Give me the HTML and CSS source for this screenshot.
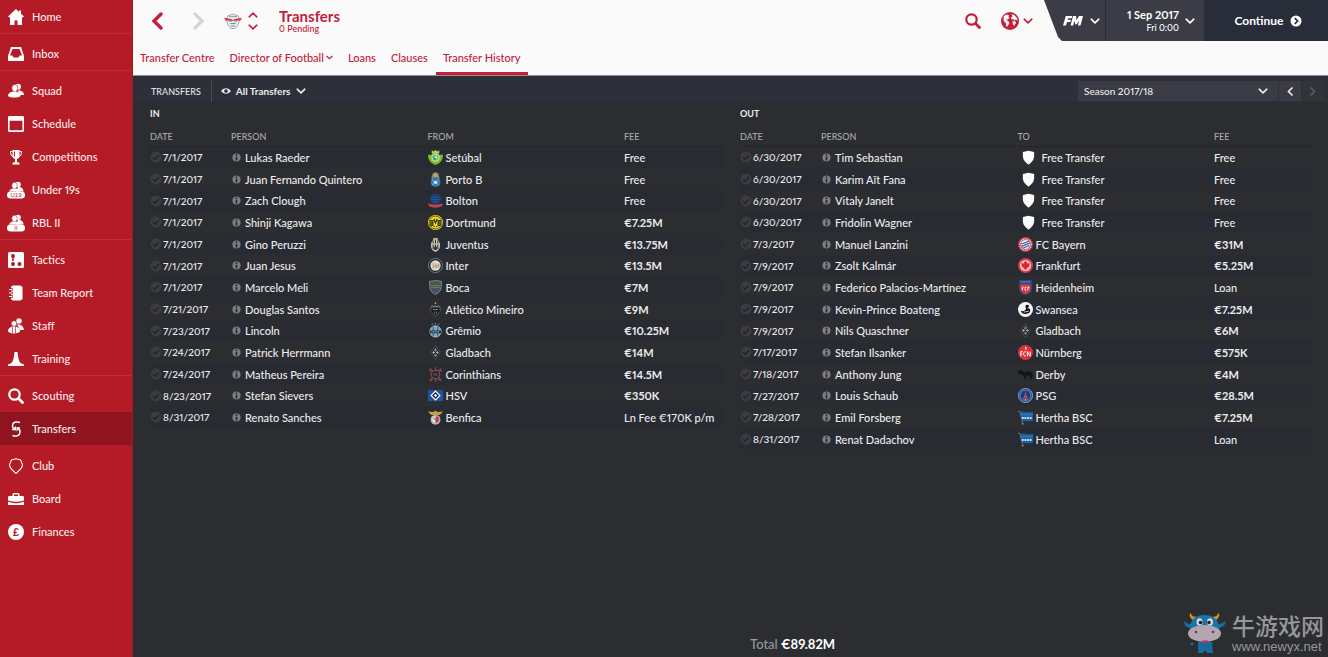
FILE: index.html
```html
<!DOCTYPE html>
<html lang="en">
<head>
  <meta charset="UTF-8">
  <meta name="viewport" content="width=device-width, initial-scale=1.0">
  <title>Transfers - Transfer History</title>
  <link rel="stylesheet" href="styles.css">
</head>
<body>

<!-- Icon sprite -->
<svg class="sprite" aria-hidden="true">
  <symbol id="chev-down" viewBox="0 0 10 6"><path d="M1.2 1.2 5 4.8 8.8 1.2" fill="none" stroke="currentColor" stroke-width="1.6" stroke-linecap="round"/></symbol>
  <symbol id="chev-left" viewBox="0 0 12 18"><path d="M10 2 3 9l7 7" fill="none" stroke="currentColor" stroke-width="3.4" stroke-linecap="round"/></symbol>
  <symbol id="chev-right" viewBox="0 0 12 18"><path d="m2 2 7 7-7 7" fill="none" stroke="currentColor" stroke-width="3.4" stroke-linecap="round"/></symbol>

  <symbol id="home" viewBox="0 0 16 16"><path d="M8 0 0 7.6l1.2 1 .8-.6V16h4.500v-4.500h3V16H14V8l.8.6 1.200-1-3-2.900V1.500h-2v1.400z"/></symbol>
  <symbol id="inbox" viewBox="0 0 16 16"><path fill-rule="evenodd" d="M3 1h10l3 9v5H0v-5zm1.500 2L2 9.500h2.500l1 2h5l1-2H14L11.500 3z"/></symbol>
  <symbol id="people" viewBox="0 0 16 16"><circle cx="10" cy="3.8" r="3"/><path d="M10 7.500c4 0 6 2 6 4.500h-5z"/><ellipse cx="6.800" cy="5" rx="3" ry="3.600" stroke="#b51a27" stroke-width=".6"/><path d="M0 13c0-3 3-4.500 6.500-4.500S12.500 10 12.500 13c-2 2-10 2-12.500 0z"/></symbol>
  <symbol id="calendar" viewBox="0 0 16 16"><path fill-rule="evenodd" d="M1 0h14l1 1v14l-1 1H1l-1-1V1zm.6 4.700v9.600h12.800V4.700z"/></symbol>
  <symbol id="trophy" viewBox="0 0 16 16"><path d="M4.500 1h7v5.500c0 2-1 3.200-2.500 3.500v3l2.500 1v1.500h-7V14L7 13v-3C5.500 9.700 4.500 8.500 4.500 6.500z"/><path d="M4.500 2.500H2.600c0 3 .5 5 2.900 5M11.500 2.500h1.900c0 3-.5 5-2.900 5" fill="none" stroke="currentColor"/><path d="M6.500 2.500v5" stroke="#b51a27"/></symbol>
  <symbol id="squad-u19" viewBox="0 0 18 18"><circle cx="11" cy="3.500" r="2.800"/><path d="M11 6c4 0 5.500 2 5.500 4.500H9z"/><ellipse cx="7.500" cy="4.500" rx="2.700" ry="3.200" stroke="#b51a27" stroke-width=".5"/><path d="M2 10.500C3 8 5 7.500 7.500 7.500s5 1 5.500 3z"/><rect y="10.500" width="18" height="7" rx="3.500"/><text x="9" y="16.400" text-anchor="middle" class="tag">U19</text></symbol>
  <symbol id="squad-ii" viewBox="0 0 18 18"><circle cx="11" cy="3.500" r="2.800"/><path d="M11 6c4 0 5.500 2 5.500 4.500H9z"/><ellipse cx="7.500" cy="4.500" rx="2.700" ry="3.200" stroke="#b51a27" stroke-width=".5"/><path d="M2 10.500C3 8 5 7.500 7.500 7.500s5 1 5.500 3z"/><rect y="10.500" width="18" height="7" rx="3.500"/><text x="9" y="16.400" text-anchor="middle" class="tag">II</text></symbol>
  <symbol id="tactics" viewBox="0 0 16 16"><rect width="16" height="16" rx="1.500"/><g fill="#b51a27"><circle cx="5" cy="4" r="2"/><path d="M4.200 5h1.600v4H4.200z"/><circle cx="5" cy="12" r="2"/><circle cx="11.500" cy="12" r="2"/></g></symbol>
  <symbol id="report" viewBox="0 0 16 16"><path d="M4.500.5h8L14.500 2v12l-2 1.500h-8L3 14V2z"/><path d="M1 4.500h4M1 8h4M1 11.500h4" stroke="#b51a27" stroke-width="2.400"/><path d="M1 4.500h3.500M1 8h3.500M1 11.500h3.500" stroke="currentColor" stroke-width="1"/></symbol>
  <symbol id="staff" viewBox="0 0 16 16"><circle cx="11" cy="3" r="2.700"/><path d="M9 6.500c4-.5 6.500 1.500 7 5.500h-4z"/><circle cx="6" cy="5.500" r="2.700" stroke="#b51a27" stroke-width=".5"/><path d="M0 13.500C0 10 2.500 8.500 6 8.500s6 1.500 6 5c-2 2.500-10 2.500-12 0z"/><path d="M4.500 9v6M7.500 9v6" stroke="#b51a27" stroke-width=".7"/></symbol>
  <symbol id="cone" viewBox="0 0 16 16"><path d="M6.500 1h3C10 7 11 10.500 12.500 12L16 13.500V15H0v-1.500L3.500 12C5 10.500 6 7 6.500 1z"/></symbol>
  <symbol id="search" viewBox="0 0 16 16"><circle cx="6.500" cy="6.500" r="5.200" fill="none" stroke="currentColor" stroke-width="2.200"/><path d="m10.500 10.500 4 4" stroke="currentColor" stroke-width="2.800" stroke-linecap="round"/></symbol>
  <symbol id="swap" viewBox="0 0 16 16"><path d="M12 1.500C8 0 4.500 1.500 4.500 4.500S6.500 8 6.500 8M4.500 14.500c4 1.500 7.500 0 7.500-3.500 0-2-1-3.500-2.500-4" fill="none" stroke="currentColor" stroke-width="1.500"/><path d="M3.500 9 8 9.500V5zM12.500 6.500 8.500 6v4.500z"/></symbol>
  <symbol id="shield-line" viewBox="0 0 16 16"><path d="M8 .8 12.500 2 14.500 6.500C14.500 10.500 11 13 8 15.300 5 13 1.500 10.500 1.500 6.500L3.500 2z" fill="none" stroke="currentColor" stroke-width="1.100"/></symbol>
  <symbol id="case" viewBox="0 0 16 16"><path fill-rule="evenodd" d="M4.500 5V3l1-1h5l1 1v2H15l1 1v3.500l-6 1.300h-4L0 9.500V6l1-1zM6 5h4V3.500H6z"/><path d="m0 10.800 6.500 1.400h3L16 10.800V14H0z"/></symbol>
  <symbol id="pound" viewBox="0 0 16 16"><circle cx="8" cy="8" r="8"/><text x="8" y="12" text-anchor="middle" class="pound-sign">£</text></symbol>
  <symbol id="globe" viewBox="0 0 18 18"><circle cx="9" cy="9" r="9"/><path d="M2.500 4.500 5 2.500l3 .5-.5 1.500L8.500 6 6.500 7.500 5 7.700l2.500 1.500.8 2-1.800 3-1 .8-.7-4L2.700 9zM10.500 2.200l2.500.6 3 3.200.5 3-1.500-1.500-1.500 1-1.500-1.500-1.500.5L10 5.500l1.500-1zM11.500 9l3 .5.5 1.500-2 3-1.200-2z" fill="#fafafa"/></symbol>
  <symbol id="eye" viewBox="0 0 12 10"><path fill-rule="evenodd" d="M0 5C2.500.5 9.500.5 12 5 9.500 9.500 2.500 9.500 0 5zm6-2.300a2.300 2.300 0 1 0 0 4.600 2.300 2.300 0 0 0 0-4.600z"/></symbol>
  <symbol id="go" viewBox="0 0 12 12"><circle cx="6" cy="6" r="5.500"/><path d="m4.800 3.200 2.800 2.800-2.800 2.800" fill="none" stroke="#282d39" stroke-width="1.700"/></symbol>
  <symbol id="fm" viewBox="0 0 20 10"><path d="M2.800 0h6.400L8.600 2.200H5l-.4 1.500h3.300L7.300 5.900H4L3 9.500H0zM10 0h3l.5 4L16 0h4l-2.500 9.500h-2.600l1.300-5-2.500 3.700h-1.600l-.6-3.700-1.300 5H7.500z"/></symbol>
  <symbol id="tick" viewBox="0 0 12 12"><circle cx="6" cy="6" r="5.500" fill="#3b3c42"/><path d="m3 6.200 2 2L9 4.200" fill="none" stroke="#23252b" stroke-width="1.500"/></symbol>
  <symbol id="info" viewBox="0 0 10 10"><circle cx="5" cy="5" r="4.500" fill="#7d7e82"/><path d="M4.100 4.300h1.800v3.900H4.100zM4.100 1.800h1.800v1.600H4.100z" fill="#25272c"/></symbol>

  <symbol id="rbl" viewBox="0 0 18 16"><path d="M3.500 3 9 1l5.500 2 1 4-1.500 5-3 3.500H7L4 12 2.500 7z" fill="#e6e9ee" stroke="#98a2b3" stroke-width=".9"/><path d="M5 3.500h8" stroke="#98a2b3"/><path d="M0 4.800 7 6l2 1 2-1 7-1.200-1.500 2.700-4.500.3H6L1.500 7.500z" fill="#dc3a4c"/><path d="m5 7.800 2.500.7M13 7.800l-2.500.7M6.500 10.500h5M7 13h4" stroke="#7d8899"/></symbol>
  <symbol id="setubal" viewBox="0 0 16 16"><path d="m4 0 2 1.500L8 0l2 1.500L12 0v4H4z" fill="#b9d433"/><path d="M0 5h16c0 6-3 9-8 11C3 14 0 11 0 5z" fill="#7cba2f"/><circle cx="8" cy="8" r="4.500" fill="#b9dfa6"/><circle cx="8" cy="8" r="3" fill="#35a556"/><path d="M7 6.500h3M7 8h2.500v2" stroke="#fff" fill="none"/></symbol>
  <symbol id="porto" viewBox="0 0 16 16"><path d="M5 1.500 8 0l3 1.500L12.500 7 8 9 3.500 7z" fill="#8d8a82"/><path d="M6.300 2h3.400v3.500H6.300z" fill="#d0a347"/><circle cx="8" cy="10.800" r="5.200" fill="#3479b5"/><path d="m4 8 8 6M12 8l-8 6" stroke="#84b5dc"/><circle cx="8" cy="11" r="1.800" fill="#dce8f2"/></symbol>
  <symbol id="bolton" viewBox="0 0 16 16"><circle cx="8" cy="6.500" r="6" fill="#193f75"/><path d="M4 4.500h8M3 7h10M5 9.500h6" stroke="#2d5b8f"/><path d="M0 11c5 2 11 2 16 0l-1.500 3.500c-4 1.500-9 1.500-13 0z" fill="#c5424c"/></symbol>
  <symbol id="bvb" viewBox="0 0 16 16"><circle cx="8" cy="8" r="8" fill="#f3e11b"/><circle cx="8" cy="8" r="6.800" fill="none" stroke="#222" stroke-width=".7"/><path d="M3 6v5h2.200V6.200zM3 8.500h2M6.200 4 8 8.500 9.800 4M10.800 6v5H13V6zM10.800 8.500h2" fill="none" stroke="#222" stroke-width="1.200"/><path d="M6 12.300h1.500M8.500 12.300H10" stroke="#222"/></symbol>
  <symbol id="juve" viewBox="0 0 16 16"><path d="M5.500 1h5v2.500h-5z" fill="#b5ac93"/><ellipse cx="8" cy="9" rx="4.800" ry="6.600" fill="#d4d1c8"/><path d="M5.500 4v9M8 3v9M10.500 4v9" stroke="#25262a" stroke-width="1.100"/><path d="M3.500 7.500h9" stroke="#cbbd91" stroke-width="1.400"/><ellipse cx="8" cy="12" rx="2" ry="2.200" fill="#3b3a36"/></symbol>
  <symbol id="inter" viewBox="0 0 16 16"><circle cx="8" cy="8" r="7.500" fill="#1c2433" stroke="#6e8790"/><circle cx="8" cy="8" r="5.500" fill="#e3ddd2"/><path d="M5.500 5v6l3-5v5l3-5v5" fill="none" stroke="#a78d62" stroke-width=".9"/></symbol>
  <symbol id="boca" viewBox="0 0 16 16"><path d="M1.500 1.500 8 .5l6.500 1L14 8c0 3.500-3 6-6 7.500C5 14 2 11.500 2 8z" fill="#46546a" stroke="#88905f"/><path d="M3.500 5.500h9v3h-9z" fill="#75814e"/><path d="M4 7h8" stroke="#333d4c" stroke-dasharray="1.500 .7"/></symbol>
  <symbol id="mineiro" viewBox="0 0 16 16"><circle cx="8" cy="1.200" r=".9" fill="#c5a635"/><path d="M3 5.500h10V10l-5 5.500L3 10z" fill="#191a1d" stroke="#666" stroke-width=".8"/><path d="m3 5.500 2-1.500 1.500 1.500L8 3.500l1.500 2L11 4l2 1.500M5 8h6" fill="none" stroke="#999" stroke-width=".8"/><path d="M7 10v3M9 10v3" stroke="#888" stroke-width=".7"/></symbol>
  <symbol id="gremio" viewBox="0 0 16 16"><path d="M4 1.200h1M7.500.6h1M11 1.200h1" stroke="#a8a698" stroke-width="1.300"/><circle cx="8" cy="9" r="6" fill="#6eaed5" stroke="#b9cdd6" stroke-width=".8"/><path d="M2.200 8h11.600v3H2.200z" fill="#20252c"/><path d="M5.500 4v10M10.500 4v10" stroke="#35404d" stroke-width=".9"/><path d="M3.500 9.500h9" stroke="#ddd" stroke-dasharray="1.200 .6"/></symbol>
  <symbol id="gladbach" viewBox="0 0 16 16"><path d="m8 .5 4.800 7.500L8 15.500 3.200 8z" fill="#17191c" stroke="#606266" stroke-width=".8"/><path d="m8 3 1.700 2.500L8 7.300 6.300 5.500zM8 9l1.700 1.700L8 13l-1.700-2.300z" fill="#85868a"/><path d="m4.500 8 1.500-1.500L7.500 8 6 9.500zm4 0L10 6.500 11.500 8 10 9.500z" fill="#bcbcbe"/></symbol>
  <symbol id="corinthians" viewBox="0 0 16 16"><path d="m2 1.500 12 12.500M14 1.500 2 14M8 0v16" stroke="#9c383b" stroke-width="1.500"/><path d="M1 4.500 4 3M12 3l3 1.500M2 15l3-2M11 13l3 2" stroke="#ad3f40" stroke-width="1.300"/><circle cx="8" cy="8" r="4.600" fill="#29292d" stroke="#7c787b" stroke-width=".8"/><path d="M5.800 6.500h4.400v3H5.800z" fill="#6a3738"/></symbol>
  <symbol id="hsv" viewBox="0 0 16 16"><path d="M0 2h16v12H0z" fill="#1d52a5"/><path d="m8 2.500 5.500 5.500L8 13.500 2.500 8z" fill="#fff"/><path d="m8 4.300 3.700 3.700L8 11.700 4.300 8z" fill="#14161a"/><path d="M8 6.200 9.800 8 8 9.800 6.200 8z" fill="#fff"/></symbol>
  <symbol id="benfica" viewBox="0 0 16 16"><path d="M0 1.500 6 2.200 8 .5l2 1.700 6-.7-3 3.500-4 .5-1 2-1-2-4-.5z" fill="#c3a040"/><circle cx="8" cy="10.500" r="5.300" fill="#b9b4ae"/><path d="M4.500 7h7v4L8 15l-3.500-4z" fill="#e9e5e0"/><path d="M8 7h3.500v4L8 15z" fill="#c13e46"/><path d="m5 8 6 5" stroke="#415a7b" stroke-width=".9"/></symbol>
  <symbol id="shield" viewBox="0 0 16 16"><path d="M2 2.200 8 .8l6 1.400v4.300c0 4.500-3 7-6 9.200-3-2.200-6-4.700-6-9.200z" fill="#fdfdfb"/></symbol>
  <symbol id="bayern" viewBox="0 0 16 16"><circle cx="8" cy="8" r="8" fill="#c93a52"/><circle cx="8" cy="8" r="6" fill="none" stroke="#eed6dc" stroke-width="1.200" stroke-dasharray="1.500 .7"/><circle cx="8" cy="8" r="4.800" fill="#e9edf5"/><path d="m3.800 7.500 8-3M3.500 10 12.500 6.500M5 12l7-3" stroke="#3c63ab" stroke-width="1.300"/></symbol>
  <symbol id="frankfurt" viewBox="0 0 16 16"><circle cx="8" cy="8" r="8" fill="#e23844"/><circle cx="8" cy="8" r="6" fill="#f3c3c5"/><path d="M3.500 5 6 6l.8-2L8 3.500 9.200 4l.8 2 2.500-1-.5 4-2 1.500L8 13l-2-2.500L4 9z" fill="#d92635"/></symbol>
  <symbol id="heidenheim" viewBox="0 0 16 16"><path d="M1 0h14v9c0 4-3 6-7 7-4-1-7-3-7-7z" fill="#244a83"/><path d="M3 2h10" stroke="#7f9ac0" stroke-dasharray="2 .6"/><path d="M2.500 4.500h11V9c0 3-2 5-5.500 6-3.500-1-5.500-3-5.500-6z" fill="#dd3340"/><path d="M4.500 11V7.500H6M4.500 9h1M9 7.500H7.500V11H9M10.500 11V7.500h1.200V9" fill="none" stroke="#fff" stroke-width=".9"/></symbol>
  <symbol id="swansea" viewBox="0 0 16 16"><circle cx="8" cy="8" r="8" fill="#f4f4f4"/><path d="M8.500 3.500c2-1.200 3.700 0 3 1.700L9.500 7c2-.8 4 0 3.500 2.500-.5 2.300-3 3.200-5.500 3.200S3.300 11.500 3 9.300c1.500.7 3 .5 4 0L8.800 7C7.800 6 7.500 4.500 8.500 3.500z" fill="#17181a"/><path d="m6 10.800 5.500-1" stroke="#f4f4f4" stroke-width=".8"/></symbol>
  <symbol id="nurnberg" viewBox="0 0 16 16"><circle cx="8" cy="8" r="8" fill="#df2f3b"/><path d="M3 12V7h2.200M3 9.300h1.700M8.500 7.500C6.500 6.500 6 8 6 9.500s1 3 2.500 2M10 12V7l3 5V7M7.500 3 8.500 2.300v3" fill="none" stroke="#fff" stroke-width="1"/></symbol>
  <symbol id="derby" viewBox="0 0 16 16"><path d="M0 4.500 3 3l3 2 6-.5 3 1.500.8 3.500-1 .5 1 3H14l-1.500-3-3-1L8 13H6.500L6 9 3 7.500 1 8z" fill="#151619"/></symbol>
  <symbol id="psg" viewBox="0 0 16 16"><circle cx="8" cy="8" r="7.500" fill="#24509a" stroke="#8fa6c9"/><circle cx="8" cy="8" r="5.500" fill="#1a3c7d" stroke="#b9c4d6" stroke-width=".6" stroke-dasharray="1.400 .7"/><path d="M8 3.500 9 8l2 4H9.500L8 9.500 6.500 12H5l2-4z" fill="#d4485a"/><path d="M7 12.500h2" stroke="#e6d38a"/></symbol>
  <symbol id="hertha" viewBox="0 0 16 16"><path d="M0 1.500h2L5 14" fill="none" stroke="#84868c" stroke-width=".9"/><circle cx="5" cy="14.700" r="1" fill="#84868c"/><path d="M2.500 2C7 1.300 10 3.300 16 2v9.500c-4 1.200-8-.3-11.500.3z" fill="#1c62ab"/><path d="M4 8.500h11" stroke="#bcd6ec" stroke-width="2.200" stroke-dasharray="2.200 .6"/><path d="M3.500 5H16" stroke="#3f80c0" stroke-width=".8"/></symbol>
</svg>

<div class="app">
  <nav class="sidebar">
    <div class="nav-group">
      <a href="#" class="nav-item"><svg><use href="#home"/></svg>Home</a>
    </div>
    <div class="nav-group">
      <a href="#" class="nav-item"><svg><use href="#inbox"/></svg>Inbox</a>
    </div>
    <div class="nav-group">
      <a href="#" class="nav-item"><svg><use href="#people"/></svg>Squad</a>
      <a href="#" class="nav-item"><svg><use href="#calendar"/></svg>Schedule</a>
      <a href="#" class="nav-item"><svg><use href="#trophy"/></svg>Competitions</a>
      <a href="#" class="nav-item"><svg class="wide"><use href="#squad-u19"/></svg>Under 19s</a>
      <a href="#" class="nav-item"><svg class="wide"><use href="#squad-ii"/></svg>RBL II</a>
    </div>
    <div class="nav-group">
      <a href="#" class="nav-item"><svg><use href="#tactics"/></svg>Tactics</a>
      <a href="#" class="nav-item"><svg><use href="#report"/></svg>Team Report</a>
      <a href="#" class="nav-item"><svg><use href="#staff"/></svg>Staff</a>
      <a href="#" class="nav-item"><svg><use href="#cone"/></svg>Training</a>
    </div>
    <div class="nav-group">
      <a href="#" class="nav-item"><svg><use href="#search"/></svg>Scouting</a>
      <a href="#" class="nav-item active"><svg><use href="#swap"/></svg>Transfers</a>
    </div>
    <div class="nav-group">
      <a href="#" class="nav-item"><svg><use href="#shield-line"/></svg>Club</a>
      <a href="#" class="nav-item"><svg><use href="#case"/></svg>Board</a>
      <a href="#" class="nav-item"><svg><use href="#pound"/></svg>Finances</a>
    </div>
  </nav>

  <main class="main">
    <header class="header">
      <div class="topbar">
        <button class="icon-btn back" aria-label="Back"><svg><use href="#chev-left"/></svg></button>
        <button class="icon-btn forward" aria-label="Forward"><svg><use href="#chev-right"/></svg></button>
        <svg class="crest"><use href="#rbl"/></svg>
        <div class="stepper">
          <button class="icon-btn up" aria-label="Previous club"><svg><use href="#chev-down"/></svg></button>
          <button class="icon-btn" aria-label="Next club"><svg><use href="#chev-down"/></svg></button>
        </div>
        <div class="title">
          <h1>Transfers</h1>
          <p>0 Pending</p>
        </div>
        <button class="icon-btn find" aria-label="Search"><svg><use href="#search"/></svg></button>
        <button class="icon-btn world" aria-label="World"><svg class="globe"><use href="#globe"/></svg><svg class="chev"><use href="#chev-down"/></svg></button>
        <div class="status">
          <button class="fm" aria-label="FM menu"><svg class="logo"><use href="#fm"/></svg><svg class="chev"><use href="#chev-down"/></svg></button>
          <button class="date"><span><b>1 Sep 2017</b><small>Fri 0:00</small></span><svg class="chev"><use href="#chev-down"/></svg></button>
          <button class="continue">Continue<svg><use href="#go"/></svg></button>
        </div>
      </div>
      <nav class="tabs">
        <a href="#">Transfer Centre</a>
        <a href="#">Director of Football<svg><use href="#chev-down"/></svg></a>
        <a href="#">Loans</a>
        <a href="#">Clauses</a>
        <a href="#" class="active">Transfer History</a>
      </nav>
    </header>

    <div class="toolbar">
      <h2>Transfers</h2>
      <button class="filter"><svg class="eye"><use href="#eye"/></svg>All Transfers<svg class="chev"><use href="#chev-down"/></svg></button>
      <div class="season">
        <select aria-label="Season">
          <option>Season 2017/18</option>
        </select>
        <svg class="chev"><use href="#chev-down"/></svg>
      </div>
      <button class="page-btn" aria-label="Previous season"><svg><use href="#chev-left"/></svg></button>
      <button class="page-btn" aria-label="Next season" disabled><svg><use href="#chev-right"/></svg></button>
    </div>

    <div class="panels">
      <section class="panel in">
        <h3>In</h3>
        <table>
          <thead>
            <tr><th class="col-date">Date</th><th>Person</th><th>From</th><th class="col-fee">Fee</th></tr>
          </thead>
          <tbody id="in-rows"></tbody>
        </table>
      </section>
      <section class="panel out">
        <h3>Out</h3>
        <table>
          <thead>
            <tr><th class="col-date">Date</th><th>Person</th><th>To</th><th class="col-fee">Fee</th></tr>
          </thead>
          <tbody id="out-rows"></tbody>
        </table>
        <p class="total">Total <b>€89.82M</b></p>
      </section>
    </div>
  </main>
</div>

<div class="watermark">
  <svg viewBox="0 0 42 42">
    <path d="M9 8C5 5 5 2 7 1c0 3 3 4 7 4zM32 8c4-3 4-6 2-7 0 3-3 4-7 4z" fill="#c99b1d"/>
    <path d="M7 12C4 12 2 11 0 9c0 5 3 7 7 7zM34 12c3 0 5-1 8-3-1 5-4 7-8 7z" fill="#1a6c9e"/>
    <path d="M20.500 3C11 3 6 8 6 17h29C35 8 30 3 20.500 3z" fill="#1b74a9"/>
    <ellipse cx="15.500" cy="10" rx="3" ry="3.800" fill="#d5d8da"/><ellipse cx="26" cy="10" rx="3" ry="3.800" fill="#d5d8da"/>
    <circle cx="16.500" cy="10.500" r="1.800" fill="#222"/><circle cx="25" cy="10.500" r="1.800" fill="#222"/>
    <path d="M14 30h14l1 11h-6l-2-3-2 3h-5z" fill="#186a9a"/>
    <circle cx="8" cy="32" r="1.500" fill="#186a9a"/>
    <ellipse cx="20.500" cy="21.500" rx="16.500" ry="8.500" fill="#b3a6b0"/>
    <circle cx="12" cy="20" r="1.300" fill="#55454f"/><circle cx="29" cy="20" r="1.300" fill="#55454f"/>
    <path d="M18 28.500h6c0 3.500-6 3.500-6 0z" fill="#c22f62"/>
  </svg>
  <div>
    <strong lang="zh">牛游戏网</strong>
    <span>www.newyx.net</span>
  </div>
</div>

<script src="script.js"></script>
</body>
</html>
```
FILE: styles.css
```css
* {
  box-sizing: border-box;
}
body {
  margin: 0;
  font-family: Lato, "Liberation Sans", sans-serif;
  font-size: 11px;
  font-weight: 500;
  font-variant-numeric: proportional-nums;
  color: #ececee;
  background: #2c2d31;
}
h1, h2, h3, p {
  margin: 0;
}
a {
  color: inherit;
  text-decoration: none;
}
button, select {
  font: inherit;
  color: inherit;
  background: none;
  border: 0;
  padding: 0;
}
svg {
  display: block;
  fill: currentColor;
  flex: none;
}
.sprite {
  display: none;
}
.tag {
  font: 6px "Liberation Sans", sans-serif;
  fill: #b51a27;
}
.pound-sign {
  font: bold 11px "Liberation Sans", sans-serif;
  fill: #b51a27;
}
.chev {
  width: 10px;
  height: 6px;
}

.app {
  display: flex;
  min-height: 100vh;
}

/* sidebar */
.sidebar {
  width: 133px;
  flex: none;
  background: #b51a27;
  border-right: 1px solid #a01822;
  color: #fbe9ea;
}
.nav-group {
  padding-top: 3px;
  border-bottom: 1px solid #c02d39;
}
.nav-group:first-child {
  padding-top: 0;
}
.nav-group:nth-last-child(-n+2) {
  border-bottom-color: transparent;
}
.nav-item {
  display: flex;
  align-items: center;
  height: 33px;
  padding-left: 8px;
  gap: 8px;
}
.nav-item svg {
  width: 16px;
  height: 16px;
  color: #fff;
}
.nav-item .wide {
  width: 18px;
  height: 18px;
  margin: 0 -1px;
}
.nav-item.active {
  background: #8f141e;
}

/* header */
.main {
  flex: 1;
  min-width: 0;
  display: flex;
  flex-direction: column;
}
.header {
  height: 76px;
  background: #fafafa;
  border-bottom: 1px solid #8f9092;
  color: #c2203a;
}
.topbar {
  display: flex;
  align-items: center;
  height: 42px;
  padding-left: 18px;
}
.icon-btn {
  display: flex;
  align-items: center;
}
.back svg, .forward svg {
  width: 12px;
  height: 18px;
}
.forward {
  margin-left: 30px;
  color: #d6d4d4;
}
.crest {
  width: 18px;
  height: 16px;
  margin-left: 19px;
}
.stepper {
  display: flex;
  flex-direction: column;
  gap: 6px;
  margin-left: 6px;
}
.stepper svg {
  width: 10px;
  height: 6px;
}
.up {
  transform: rotate(180deg);
}
.title {
  margin-left: 21px;
}
.title h1 {
  font-size: 15px;
  line-height: 16px;
}
.title p {
  font-size: 9px;
  line-height: 10px;
}
.find {
  margin-left: auto;
}
.find svg {
  width: 16px;
  height: 16px;
}
.world {
  gap: 4px;
  margin: 0 11px 0 20px;
}
.globe {
  width: 18px;
  height: 18px;
}
.status {
  display: flex;
  align-self: flex-start;
  height: 41px;
  color: #fff;
  background: #3b3c46;
  clip-path: polygon(0 0, 14px 37px, 18px 100%, 100% 100%, 100% 0);
}
.status button {
  display: flex;
  align-items: center;
}
.fm {
  width: 61px;
  padding-left: 19px;
  gap: 7px;
}
.fm .logo {
  width: 20px;
  height: 10px;
}
.status .date {
  justify-content: flex-end;
  width: 99px;
  padding-right: 9px;
  gap: 6px;
  border-left: 1px solid #2d2e37;
  text-align: right;
}
.date b, .date small {
  display: block;
  font-size: 11px;
  line-height: 13px;
}
.date small {
  font-size: 9px;
}
.status .continue {
  justify-content: center;
  gap: 6px;
  width: 124px;
  padding-left: 4px;
  background: #282d39;
  font-size: 12px;
  font-weight: 700;
}
.continue svg {
  width: 12px;
  height: 12px;
}
.tabs {
  display: flex;
  height: 33px;
}
.tabs a {
  display: flex;
  align-items: center;
  gap: 2px;
  padding: 0 8px 0 7px;
  border-bottom: 3px solid transparent;
}
.tabs a.active {
  border-bottom-color: #c2203a;
}
.tabs svg {
  width: 7px;
  height: 5px;
}

/* toolbar */
.toolbar {
  display: flex;
  align-items: center;
  height: 26px;
  padding: 4px 4px 0 18px;
  background: #2d3038;
}
.toolbar h2 {
  font-size: 9px;
  font-weight: 500;
  text-transform: uppercase;
  color: #e2e3e6;
}
.filter {
  display: flex;
  align-items: center;
  height: 21px;
  gap: 5px;
  margin-left: 10px;
  padding-left: 9px;
  border-left: 1px solid #4a4c54;
}
.toolbar .filter {
  font-size: 10px;
  font-weight: 700;
}
.eye {
  width: 10px;
  height: 8px;
}
.season {
  position: relative;
  margin-left: auto;
  width: 200px;
}
.season select {
  appearance: none;
  display: block;
  width: 100%;
  height: 20px;
  padding-left: 6px;
  background: #3a3b44;
  font-size: 10px;
}
.season .chev {
  position: absolute;
  right: 10px;
  top: 7px;
  pointer-events: none;
}
.page-btn {
  display: flex;
  align-items: center;
  justify-content: center;
  width: 22px;
  height: 20px;
  margin-left: 1px;
  background: #3a3b44;
}
.page-btn svg {
  width: 6px;
  height: 9px;
}
.page-btn:disabled {
  background: #32343b;
  color: #5b5d65;
}

/* transfer lists */
.panels {
  flex: 1;
  display: grid;
  grid-template-columns: 1fr 1fr;
  padding: 0 7px 0 8px;
}
.panel {
  display: flex;
  flex-direction: column;
  padding: 4px 9px 4px 8px;
  border-left: 1px solid #292a2e;
}
.panel h3 {
  font-size: 9px;
  line-height: 15px;
  text-transform: uppercase;
}
table {
  width: 100%;
  margin-top: 6px;
  table-layout: fixed;
  border-collapse: collapse;
}
th {
  height: 19px;
  padding: 0;
  border-bottom: 1px solid #25262a;
  font-size: 9px;
  font-weight: 500;
  text-align: left;
  text-transform: uppercase;
  color: #a9aaae;
}
.col-date {
  width: 81px;
}
.col-fee {
  width: 98px;
}
td {
  height: 22px;
  padding: 0;
  white-space: nowrap;
}
td:first-child {
  font-size: 10px;
}
/* keeps the average row a little under 22px */
tr:nth-child(3n) td {
  height: 21px;
}
.in tbody tr:nth-child(odd), .out tbody tr:nth-child(even) {
  background: #282b32;
}
.cell {
  display: flex;
  align-items: center;
}
.tick {
  width: 12px;
  height: 12px;
  margin-right: 1px;
}
.info {
  width: 9px;
  height: 9px;
  margin: 0 4px 0 1px;
}
.club {
  width: 15px;
  height: 15px;
  margin-right: 3px;
}
.free .club {
  margin: 0 6px 0 3px;
}
.money {
  font-weight: 700;
}
.total {
  margin-top: auto;
  padding-left: 10px;
  font-size: 13px;
  line-height: 18px;
  color: #97989b;
}
.total b {
  color: #fff;
}

.watermark {
  position: absolute;
  right: 4px;
  bottom: 3px;
  display: flex;
  align-items: center;
  gap: 6px;
  color: #96979a;
}
.watermark svg {
  width: 42px;
  height: 42px;
}
.watermark strong, .watermark span {
  display: block;
}
.watermark strong {
  font: 500 23px/28px "Noto Sans CJK SC", sans-serif;
}
.watermark span {
  font: 13px/15px "Liberation Sans", sans-serif;
}
```
FILE: script.js
```js
const transfersIn = [
  ['7/1/2017', 'Lukas Raeder', 'setubal', 'Setúbal', 'Free'],
  ['7/1/2017', 'Juan Fernando Quintero', 'porto', 'Porto B', 'Free'],
  ['7/1/2017', 'Zach Clough', 'bolton', 'Bolton', 'Free'],
  ['7/1/2017', 'Shinji Kagawa', 'bvb', 'Dortmund', '€7.25M'],
  ['7/1/2017', 'Gino Peruzzi', 'juve', 'Juventus', '€13.75M'],
  ['7/1/2017', 'Juan Jesus', 'inter', 'Inter', '€13.5M'],
  ['7/1/2017', 'Marcelo Meli', 'boca', 'Boca', '€7M'],
  ['7/21/2017', 'Douglas Santos', 'mineiro', 'Atlético Mineiro', '€9M'],
  ['7/23/2017', 'Lincoln', 'gremio', 'Grêmio', '€10.25M'],
  ['7/24/2017', 'Patrick Herrmann', 'gladbach', 'Gladbach', '€14M'],
  ['7/24/2017', 'Matheus Pereira', 'corinthians', 'Corinthians', '€14.5M'],
  ['8/23/2017', 'Stefan Sievers', 'hsv', 'HSV', '€350K'],
  ['8/31/2017', 'Renato Sanches', 'benfica', 'Benfica', 'Ln Fee €170K p/m']
];

const transfersOut = [
  ['6/30/2017', 'Tim Sebastian', 'shield', 'Free Transfer', 'Free'],
  ['6/30/2017', 'Karim Aït Fana', 'shield', 'Free Transfer', 'Free'],
  ['6/30/2017', 'Vitaly Janelt', 'shield', 'Free Transfer', 'Free'],
  ['6/30/2017', 'Fridolin Wagner', 'shield', 'Free Transfer', 'Free'],
  ['7/3/2017', 'Manuel Lanzini', 'bayern', 'FC Bayern', '€31M'],
  ['7/9/2017', 'Zsolt Kalmár', 'frankfurt', 'Frankfurt', '€5.25M'],
  ['7/9/2017', 'Federico Palacios-Martínez', 'heidenheim', 'Heidenheim', 'Loan'],
  ['7/9/2017', 'Kevin-Prince Boateng', 'swansea', 'Swansea', '€7.25M'],
  ['7/9/2017', 'Nils Quaschner', 'gladbach', 'Gladbach', '€6M'],
  ['7/17/2017', 'Stefan Ilsanker', 'nurnberg', 'Nürnberg', '€575K'],
  ['7/18/2017', 'Anthony Jung', 'derby', 'Derby', '€4M'],
  ['7/27/2017', 'Louis Schaub', 'psg', 'PSG', '€28.5M'],
  ['7/28/2017', 'Emil Forsberg', 'hertha', 'Hertha BSC', '€7.25M'],
  ['8/31/2017', 'Renat Dadachov', 'hertha', 'Hertha BSC', 'Loan']
];

function icon(id, cls) {
  return `<svg class="${cls}"><use href="#${id}"/></svg>`;
}

function renderRows(id, rows) {
  document.getElementById(id).innerHTML = rows.map(([date, person, crest, club, fee]) => `
    <tr>
      <td><div class="cell">${icon('tick', 'tick')}${date}</div></td>
      <td><div class="cell">${icon('info', 'info')}${person}</div></td>
      <td><div class="cell ${crest === 'shield' ? 'free' : ''}">${icon(crest, 'club')}${club}</div></td>
      <td class="${fee.startsWith('€') ? 'money' : ''}">${fee}</td>
    </tr>`).join('');
}

renderRows('in-rows', transfersIn);
renderRows('out-rows', transfersOut);
```
